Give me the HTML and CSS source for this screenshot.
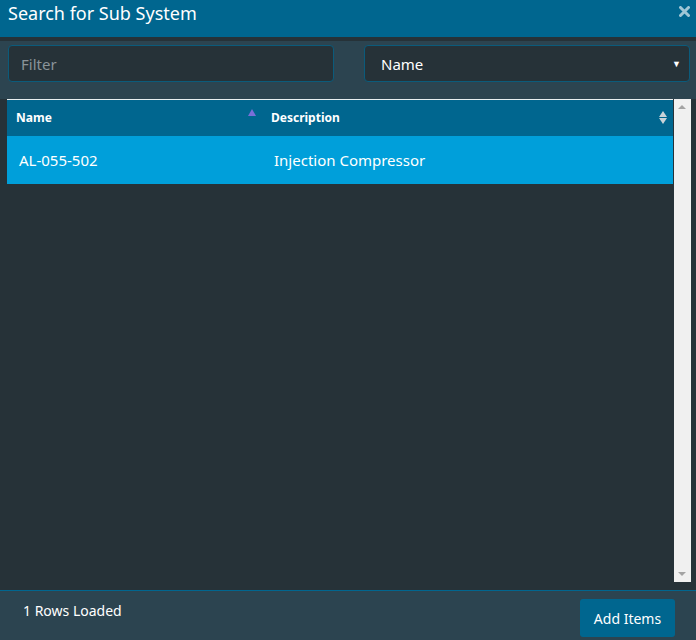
FILE: index.html
```html
<!DOCTYPE html>
<html>
<head>
<meta charset="utf-8">
<link rel="stylesheet" href="styles.css">
</head>
<body>
<div class="dialog">
  <div class="titlebar">
    <span class="title">Search for Sub System</span>
    <svg class="close" width="11" height="11" viewBox="0 0 11 11"><path d="M1.5 1.5 L9.5 9.5 M9.5 1.5 L1.5 9.5" stroke="#9fc6d6" stroke-width="3" stroke-linecap="round"/></svg>
  </div>
  <div class="toolbar">
    <div class="field"><span class="placeholder">Filter</span></div>
    <div class="field select"><span class="value">Name</span><span class="caret">&#9660;</span></div>
  </div>
  <div class="grid">
    <div class="table">
      <div class="thead">
        <div class="th col1">Name<span class="sort-up"></span></div>
        <div class="th col2">Description<span class="sort-both"><i class="up"></i><i class="down"></i></span></div>
      </div>
      <div class="row selected">
        <div class="td col1">AL-055-502</div>
        <div class="td col2">Injection Compressor</div>
      </div>
    </div>
    <div class="scrollbar">
      <span class="arr-up"></span>
      <span class="arr-down"></span>
    </div>
  </div>
  <div class="footer">
    <span class="count">1 Rows Loaded</span>
    <button class="btn">Add Items</button>
  </div>
</div>
</body>
</html>
```
FILE: styles.css
```css
html, body {
  margin: 0;
  padding: 0;
  background: #263238;
  font-family: "Noto Sans", "Open Sans", sans-serif;
  color: #fff;
}
.dialog {
  width: 696px;
  height: 640px;
  display: flex;
  flex-direction: column;
}
.titlebar {
  height: 37px;
  background: #00668f;
  display: flex;
  justify-content: space-between;
  align-items: flex-start;
  padding: 0 6px 0 8px;
  box-sizing: border-box;
}
.title {
  font-size: 18px;
  line-height: 27px;
  color: #fff;
}
.close {
  margin-top: 6px;
}
.toolbar {
  margin-top: 4px;
  background: #2c4450;
  height: 58px;
  box-sizing: border-box;
  padding: 4px 7px 0 8px;
  display: grid;
  grid-template-columns: 326px 326px;
  column-gap: 30px;
  align-items: start;
}
.field {
  height: 37px;
  box-sizing: border-box;
  border: 1px solid #0b5b7b;
  border-radius: 4px;
  background: #263238;
  display: flex;
  align-items: center;
  padding: 0 8px 0 12px;
  font-size: 15px;
}
.placeholder { color: #8a9499; }
.select { justify-content: space-between; padding-left: 16px; }
.value { color: #fff; }
.caret { font-size: 9px; color: #fff; }
.grid {
  height: 491px;
  display: flex;
  padding: 0 5px 0 7px;
  gap: 1px;
  box-sizing: border-box;
}
.table {
  flex: 1;
  border-top: 1px solid #e8eef0;
  align-self: flex-start;
}
.thead {
  display: flex;
  height: 36px;
  background: #00668f;
  align-items: center;
}
.th {
  font-size: 12px;
  font-weight: bold;
  position: relative;
  box-sizing: border-box;
  height: 36px;
  line-height: 36px;
}
.col1 { width: 255px; padding-left: 9px; box-sizing: border-box; }
.col2 { flex: 1; padding-left: 9px; }
.sort-up {
  position: absolute;
  right: 6px;
  top: 9px;
  width: 0; height: 0;
  border-left: 4px solid transparent;
  border-right: 4px solid transparent;
  border-bottom: 7px solid #7a6fd8;
}
.sort-both {
  position: absolute;
  right: 6px;
  top: 11px;
  display: flex;
  flex-direction: column;
  gap: 1px;
}
.sort-both i {
  display: block;
  width: 0; height: 0;
  border-left: 4px solid transparent;
  border-right: 4px solid transparent;
}
.sort-both .up { border-bottom: 6px solid #c9d3d8; }
.sort-both .down { border-top: 6px solid #c9d3d8; }
.row {
  display: flex;
  height: 48px;
  align-items: center;
  font-size: 15px;
}
.row.selected { background: #009fda; }
.td.col1 { padding-left: 12px; }
.td.col2 { padding-left: 12px; }
.scrollbar {
  width: 17px;
  height: 483px;
  background: #f0f0f0;
  position: relative;
}
.arr-up {
  position: absolute;
  left: 4px; top: 6px;
  width: 0; height: 0;
  border-left: 4px solid transparent;
  border-right: 4px solid transparent;
  border-bottom: 4px solid #a3a3a3;
}
.arr-down {
  position: absolute;
  left: 4px; bottom: 6px;
  width: 0; height: 0;
  border-left: 4px solid transparent;
  border-right: 4px solid transparent;
  border-top: 4px solid #a3a3a3;
}
.footer {
  flex: 1;
  background: #2c4450;
  border-top: 1px solid #00668f;
  display: flex;
  justify-content: space-between;
  align-items: flex-start;
  padding: 8px 21px 0 23px;
}
.count {
  font-size: 14px;
  line-height: 20px;
  margin-top: 2px;
}
.btn {
  background: #00668f;
  border: none;
  border-radius: 3px;
  color: #fff;
  font-family: inherit;
  font-size: 14px;
  width: 95px;
  height: 38px;
  padding: 0;
}
```
